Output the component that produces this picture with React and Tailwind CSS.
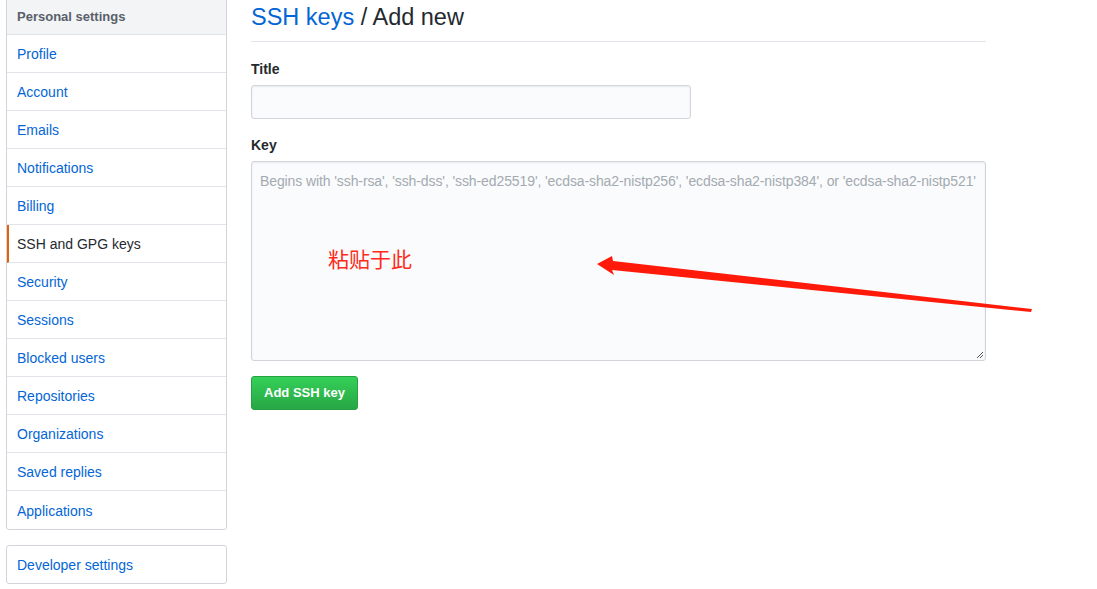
import React from "react";

const items = [
  "Profile",
  "Account",
  "Emails",
  "Notifications",
  "Billing",
  "SSH and GPG keys",
  "Security",
  "Sessions",
  "Blocked users",
  "Repositories",
  "Organizations",
  "Saved replies",
  "Applications",
];

const Sidebar = () => (
  <div className="w-[221px] shrink-0">
    <div className="border border-[#d1d5da] rounded-b-[3px] bg-white -mt-[4px]">
      <div className="h-[38px] flex items-center pt-[2px] px-[10px] bg-[#f3f4f6] border-b border-[#e1e4e8] text-[13px] font-semibold text-[#586069]">
        Personal settings
      </div>
      {items.map((label, i) => {
        const active = label === "SSH and GPG keys";
        return (
          <div
            key={label}
            className={`h-[38px] flex items-center pt-[2px] text-[14px] ${
              i < items.length - 1 ? "border-b border-[#e1e4e8]" : ""
            } ${
              active
                ? "border-l-2 border-l-[#e36209] pl-[8px] text-[#24292e]"
                : "pl-[10px] text-[#0366d6]"
            }`}
          >
            {label}
          </div>
        );
      })}
    </div>
    <div className="mt-[15px] h-[39px] border border-[#d1d5da] rounded-[3px] flex items-center pt-[1px] pl-[10px] text-[14px] text-[#0366d6]">
      Developer settings
    </div>
  </div>
);

export default function App() {
  return (
    <div
      className="relative w-[1097px] h-[589px] overflow-hidden bg-white"
      style={{ fontFamily: '"Liberation Sans", "Noto Sans CJK SC", sans-serif' }}
    >
      <div className="flex pl-[6px] gap-[24px]">
        <Sidebar />
        <div className="w-[735px] pt-[3px]">
          <div className="h-[39px] border-b border-[#e1e4e8] text-[23.5px] leading-[28px] text-[#24292e]">
            <span className="text-[#0366d6]">SSH keys</span> / Add new
          </div>
          <div className="mt-[18px] text-[14px] font-bold text-[#24292e] leading-[18px]">Title</div>
          <div className="mt-[7px] w-[440px] h-[34px] bg-[#fafbfc] border border-[#d1d5da] rounded-[3px] shadow-[inset_0_1px_2px_rgba(27,31,35,0.075)]" />
          <div className="mt-[17px] text-[14px] font-bold text-[#24292e] leading-[18px]">Key</div>
          <div className="relative mt-[7px] w-[735px] h-[200px] bg-[#fafbfc] border border-[#d1d5da] rounded-[3px] shadow-[inset_0_1px_2px_rgba(27,31,35,0.075)]">
            <div className="pt-[9px] pl-[8px] text-[14px] text-[#a3aab1] tracking-[-0.1px] whitespace-nowrap">
              Begins with 'ssh-rsa', 'ssh-dss', 'ssh-ed25519', 'ecdsa-sha2-nistp256', 'ecdsa-sha2-nistp384', or 'ecdsa-sha2-nistp521'
            </div>
            <svg className="absolute right-[1px] bottom-[1px]" width="9" height="9" viewBox="0 0 9 9">
              <path d="M8 2 L2 8 M8 5 L5 8" stroke="#555" strokeWidth="1" />
            </svg>
          </div>
          <button className="mt-[15px] h-[34px] px-[12px] rounded-[3px] border border-[#279f43] bg-gradient-to-b from-[#34d058] to-[#28a745] text-white text-[13px] font-bold">
            Add SSH key
          </button>
        </div>
      </div>

      <div className="absolute left-[328px] top-[247px] text-[21px] leading-[26px] text-[#ff2a1a]">
        粘贴于此
      </div>
      <svg className="absolute left-0 top-0" width="1097" height="589" viewBox="0 0 1097 589">
        <polygon
          points="1032,309 613,261 612,256 597,264 614,275 612,270 1031,312"
          fill="#ff1a0a"
        />
      </svg>
    </div>
  );
}
